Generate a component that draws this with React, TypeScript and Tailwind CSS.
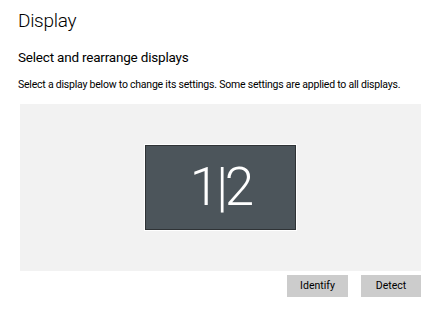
export default function App() {
  return (
    <div className="w-[430px] h-[309px] bg-white overflow-hidden" style={{ fontFamily: 'Roboto, "Open Sans", sans-serif' }}>
      <div className="pl-[18px] pr-[9px] pt-[7px] flex flex-col">
        <div className="text-[19px] font-light leading-[28px] tracking-[-0.3px] text-black">Display</div>
        <div className="mt-[12px] text-[13.5px] leading-[20px] tracking-[-0.2px] text-black whitespace-nowrap">Select and rearrange displays</div>
        <div className="mt-[10px] text-[10.5px] leading-[16px] tracking-[-0.22px] text-black whitespace-nowrap">Select a display below to change its settings. Some settings are applied to all displays.</div>
        <div className="mt-[11px] ml-[2px] h-[167px] bg-[#f2f2f2] flex items-center justify-center">
          <div className="w-[151px] h-[85px] bg-[#4c555b] border border-[#2f3336] outline outline-1 outline-white flex items-center justify-center">
            <span className="text-white text-[53px] font-light leading-none tracking-[-3px]">1|2</span>
          </div>
        </div>
        <div className="mt-[4px] flex justify-end gap-[13px]">
          <button className="w-[61px] h-[22px] bg-[#cccccc] text-[10.5px] text-black">Identify</button>
          <button className="w-[60px] h-[22px] bg-[#cccccc] text-[10.5px] text-black">Detect</button>
        </div>
      </div>
    </div>
  );
}
